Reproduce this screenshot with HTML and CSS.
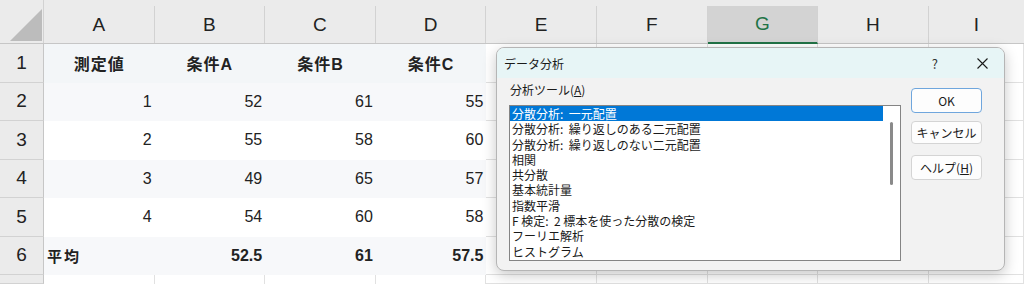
FILE: index.html
```html
<!DOCTYPE html>
<html lang="ja">
<head>
  <meta charset="UTF-8">
  <title>データ分析</title>
  <link rel="stylesheet" href="styles.css">
</head>
<body>
  <div class="sheet">
    <div class="colhead">
      <div class="corner"><div class="tri"></div></div>
      <div class="ch">A</div>
      <div class="ch">B</div>
      <div class="ch">C</div>
      <div class="ch">D</div>
      <div class="ch">E</div>
      <div class="ch">F</div>
      <div class="ch sel">G</div>
      <div class="ch">H</div>
      <div class="ch last">I</div>
    </div>

    <div class="row r1">
      <div class="rh">1</div>
      <div class="c hd">測定値</div><div class="c hd">条件A</div><div class="c hd">条件B</div><div class="c hd">条件C</div>
      <div class="c g"></div><div class="c g"></div><div class="c g"></div><div class="c g"></div><div class="c g"></div>
    </div>
    <div class="row tint">
      <div class="rh">2</div>
      <div class="c n">1</div><div class="c n">52</div><div class="c n">61</div><div class="c n">55</div>
      <div class="c g"></div><div class="c g"></div><div class="c g"></div><div class="c g"></div><div class="c g"></div>
    </div>
    <div class="row">
      <div class="rh">3</div>
      <div class="c n">2</div><div class="c n">55</div><div class="c n">58</div><div class="c n">60</div>
      <div class="c g"></div><div class="c g"></div><div class="c g"></div><div class="c g"></div><div class="c g"></div>
    </div>
    <div class="row tint">
      <div class="rh">4</div>
      <div class="c n">3</div><div class="c n">49</div><div class="c n">65</div><div class="c n">57</div>
      <div class="c g"></div><div class="c g"></div><div class="c g"></div><div class="c g"></div><div class="c g"></div>
    </div>
    <div class="row">
      <div class="rh">5</div>
      <div class="c n">4</div><div class="c n">54</div><div class="c n">60</div><div class="c n">58</div>
      <div class="c g"></div><div class="c g"></div><div class="c g"></div><div class="c g"></div><div class="c g"></div>
    </div>
    <div class="row tint">
      <div class="rh">6</div>
      <div class="c b">平均</div><div class="c n b">52.5</div><div class="c n b">61</div><div class="c n b">57.5</div>
      <div class="c g"></div><div class="c g"></div><div class="c g"></div><div class="c g"></div><div class="c g"></div>
    </div>
    <div class="row r7">
      <div class="rh"></div>
      <div class="c g"></div><div class="c g"></div><div class="c g"></div><div class="c g"></div>
      <div class="c g"></div><div class="c g"></div><div class="c g"></div><div class="c g"></div><div class="c g"></div>
    </div>
  </div>

  <div class="dialog">
    <div class="titlebar">
      <span class="title">データ分析</span>
      <span class="help">?</span>
      <svg class="close" width="11" height="11" viewBox="0 0 11 11"><path d="M0.5 0.5L10.5 10.5M10.5 0.5L0.5 10.5" stroke="#1a1a1a" stroke-width="1.1" fill="none"/></svg>
    </div>
    <div class="dbody">
      <div class="left">
        <div class="label">分析ツール(<u>A</u>)</div>
        <div class="listbox">
          <ul class="items">
            <li class="on">分散分析:&nbsp; 一元配置</li>
            <li>分散分析:&nbsp; 繰り返しのある二元配置</li>
            <li>分散分析:&nbsp; 繰り返しのない二元配置</li>
            <li>相関</li>
            <li>共分散</li>
            <li>基本統計量</li>
            <li>指数平滑</li>
            <li>F 検定:&nbsp; 2 標本を使った分散の検定</li>
            <li>フーリエ解析</li>
            <li>ヒストグラム</li>
          </ul>
          <div class="track"><div class="thumb"></div></div>
        </div>
      </div>
      <div class="buttons">
        <button class="btn ok">OK</button>
        <button class="btn cancel">キャンセル</button>
        <button class="btn">ヘルプ(<u>H</u>)</button>
      </div>
    </div>
  </div>
</body>
</html>
```

FILE: styles.css
```css
body {
  margin: 0;
  width: 1024px;
  height: 284px;
  overflow: hidden;
  background: #fff;
  font-family: "Liberation Sans", "Noto Sans CJK JP", sans-serif;
  color: #222;
}
.sheet {
  width: 1024px;
}
.colhead, .row {
  display: grid;
  grid-template-columns: 44px repeat(8, 110.6px) 1fr;
}
.colhead {
  height: 44px;
  background: #ebebeb;
  border-bottom: 1px solid #c6c6c6;
  box-sizing: border-box;
}
.corner {
  border-right: 1px solid #d2d2d2;
}
.tri {
  width: 0;
  height: 0;
  margin: 9px 0 0 10px;
  border-left: 32px solid transparent;
  border-bottom: 32px solid #bcbcbc;
}
.ch {
  margin-top: 6px;
  border-right: 1px solid #d2d2d2;
  display: flex;
  align-items: center;
  justify-content: center;
  font-size: 19px;
  color: #222;
}
.ch.last { border-right: none; }
.ch.sel {
  background: #d3d3d3;
  color: #217346;
  border-bottom: 2px solid #217346;
  margin-bottom: -1px;
}
.row {
  height: 38.5px;
}
.r7 { height: 9px; }
.rh {
  background: #ebebeb;
  border-right: 1px solid #c6c6c6;
  border-bottom: 1px solid #d2d2d2;
  display: flex;
  align-items: center;
  justify-content: center;
  font-size: 19px;
  color: #222;
}
.c {
  display: flex;
  align-items: center;
  font-size: 16px;
  padding: 0 3px;
}
.r1 .c.hd { background: #f3f6f8; }
.tint .c:not(.g) { background: #f7f8fa; }
.hd {
  justify-content: center;
  font-weight: bold;
  font-size: 16px;
  letter-spacing: 1px;
}
.n { justify-content: flex-end; }
.b { font-weight: bold; }
.c.b:not(.n) {
  font-family: "Noto Sans CJK JP", sans-serif;
  letter-spacing: 2px;
  font-size: 15px;
}
.g {
  border-right: 1px solid #e1e1e1;
  border-bottom: 1px solid #e1e1e1;
}
.r7 .c.g:nth-child(-n+5) { border-bottom: none; }

/* dialog */
.dialog {
  position: absolute;
  left: 496px;
  top: 47px;
  width: 509px;
  height: 224px;
  box-sizing: border-box;
  background: #f2f2f2;
  border: 1px solid #b5b5b5;
  border-radius: 8px;
  box-shadow: 0 4px 14px rgba(0,0,0,0.22);
  overflow: hidden;
  font-family: "Noto Sans CJK JP", sans-serif;
  font-size: 12px;
  color: #1a1a1a;
}
.titlebar {
  height: 30px;
  background: #e7f5f6;
  display: flex;
  align-items: center;
  padding: 0 0 0 7px;
}
.title { flex: 1; }
.help {
  font-size: 13px;
  color: #333;
  margin-right: 39px;
}
.close { margin-right: 16px; }
.dbody {
  display: flex;
  padding: 3px 0 0 12px;
}
.left {
  width: 392px;
}
.label {
  height: 24px;
  line-height: 18px;
  padding-left: 1px;
}
.listbox {
  height: 156px;
  box-sizing: border-box;
  border: 1px solid #848484;
  background: #fff;
  display: flex;
}
.items {
  list-style: none;
  margin: 0;
  padding: 0;
  flex: 1;
}
.items li {
  height: 15.3px;
  line-height: 15.3px;
  padding-left: 2px;
  white-space: nowrap;
}
.items li.on {
  background: #0078d7;
  color: #fff;
}
.track {
  width: 17px;
  position: relative;
}
.thumb {
  position: absolute;
  left: 7px;
  top: 16px;
  width: 3px;
  height: 63px;
  border-radius: 2px;
  background: #8a8a8a;
}
.buttons {
  display: flex;
  flex-direction: column;
  margin-left: 10px;
  padding-top: 7px;
}
.btn {
  width: 71px;
  height: 25px;
  margin-bottom: 8px;
  box-sizing: border-box;
  border: 1px solid #d4d4d4;
  border-radius: 4px;
  background: #fdfdfd;
  font-family: "Noto Sans CJK JP", sans-serif;
  font-size: 12px;
  color: #1a1a1a;
  padding: 0;
}
.btn.ok { border: 1px solid #6fa6dd; }
.btn.cancel { height: 23px; margin-bottom: 11px; }
```
